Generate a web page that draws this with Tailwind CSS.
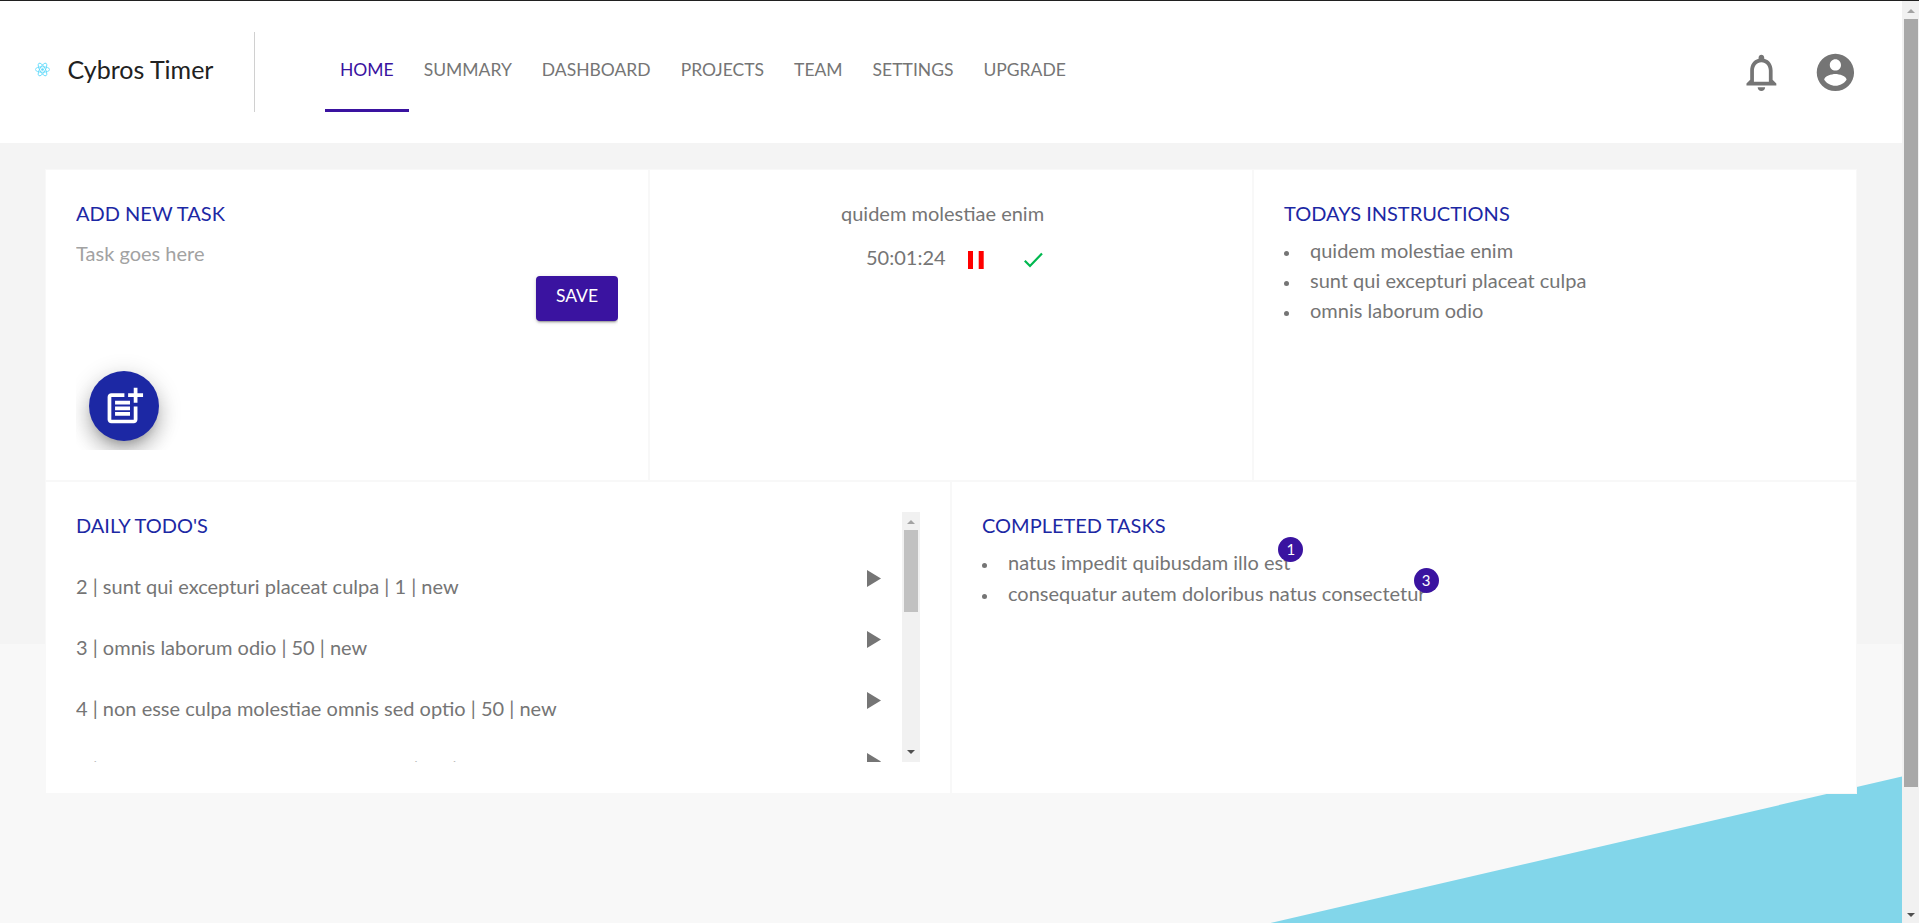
<!DOCTYPE html>
<html lang="en">
<head>
<meta charset="utf-8">
<title>Cybros Timer</title>
<script src="https://cdn.jsdelivr.net/npm/@tailwindcss/browser@4"></script>
</head>
<body class="h-[923px] w-[1919px] overflow-hidden bg-[#f8f8f8] font-[Lato,'Noto_Sans',sans-serif] text-[20px] leading-[24px] text-[#757575]">
<div class="relative flex h-full border-t border-[#202020]">

  <!-- Page backdrop: grey band and teal wedge -->
  <div class="absolute inset-x-0 top-0 h-[643px] bg-[#f4f4f4]"></div>
  <svg class="absolute left-0 top-0 h-[922px] w-[1902px]" viewBox="0 1 1902 922"><path d="M1902 776.6V923H1270.5z" fill="#82d6ea"/></svg>

  <div class="relative flex w-[1902px] flex-col">
    <header class="flex h-[142px] items-start bg-white pt-[31px]">
      <div class="flex h-[80px] w-[255px] items-center border-r border-[#d0d0d0] pb-[5px] pl-[35px]">
        <svg class="h-[15px] w-[15px] shrink-0" viewBox="-11.5 -11.5 23 23" fill="none" stroke="#61dafb" stroke-width="1.300"><circle r="2.05" fill="#61dafb" stroke="none"/><ellipse rx="11" ry="4.2"/><ellipse rx="11" ry="4.2" transform="rotate(60)"/><ellipse rx="11" ry="4.2" transform="rotate(120)"/></svg>
        <span class="mb-[2px] ml-[17.5px] whitespace-nowrap text-[25px] leading-[30px] text-[#212121]">Cybros Timer</span>
      </div>
      <nav class="ml-[70px] flex h-[80px] text-[17.5px] leading-[21px]">
        <a class="flex items-center border-b-[3px] border-[#3a13a0] px-[15px] pb-[3px] text-[#3a13a0]">HOME</a>
        <a class="flex items-center px-[15px] pb-[6px]">SUMMARY</a>
        <a class="flex items-center px-[15px] pb-[6px]">DASHBOARD</a>
        <a class="flex items-center px-[15px] pb-[6px]">PROJECTS</a>
        <a class="flex items-center px-[15px] pb-[6px]">TEAM</a>
        <a class="flex items-center px-[15px] pb-[6px]">SETTINGS</a>
        <a class="flex items-center px-[15px] pb-[6px]">UPGRADE</a>
      </nav>
      <div class="ml-auto mr-[44.5px] mt-[17.5px] flex gap-[28.7px]">
        <svg class="size-[44.8px]" viewBox="0 0 24 24" fill="#757575"><path d="M12 22c1.1 0 2-.9 2-2h-4c0 1.1.9 2 2 2zm6-6v-5c0-3.07-1.63-5.64-4.5-6.32V4c0-.83-.67-1.5-1.5-1.5s-1.5.67-1.5 1.5v.68C7.64 5.36 6 7.92 6 11v5l-2 2v1h16v-1l-2-2zm-2 1H8v-6c0-2.48 1.51-4.5 4-4.5s4 2.02 4 4.5v6z"/></svg>
        <svg class="size-[44.8px]" viewBox="0 0 24 24" fill="#757575"><path d="M12 2C6.48 2 2 6.48 2 12s4.48 10 10 10 10-4.48 10-10S17.52 2 12 2zm0 3c1.66 0 3 1.34 3 3s-1.34 3-3 3-3-1.34-3-3 1.34-3 3-3zm0 14.2c-2.5 0-4.71-1.28-6-3.22.03-1.99 4-3.08 6-3.08 1.99 0 5.97 1.09 6 3.08-1.29 1.94-3.5 3.22-6 3.22z"/></svg>
      </div>
    </header>

    <main class="ml-[45px] mt-[26px] w-[1812px] border border-[#f8f8f8] bg-white">
      <div class="grid h-[311px] grid-cols-[603px_604px_603px] border-b border-[#f8f8f8]">
        <section class="border-r border-[#f8f8f8] p-[30px] pr-[31px]">
          <div class="flex h-[250px] w-[542px] flex-col overflow-hidden">
            <h2 class="leading-[26px] text-[#1c28a4]">ADD NEW TASK</h2>
            <p class="mt-[15px] text-[#a2a2a2]">Task goes here</p>
            <button class="mt-[11px] flex h-[45px] w-[82px] shrink-0 justify-center self-end rounded-[4px] bg-[#3a13a0] pt-[9px] text-[17.5px] leading-[21px] text-white shadow-[0_3px_1px_-2px_rgba(0,0,0,0.2),0_2px_2px_0_rgba(0,0,0,0.14),0_1px_5px_0_rgba(0,0,0,0.12)]">SAVE</button>
            <div class="ml-[13px] mt-[50px] flex size-[70px] shrink-0 items-center justify-center rounded-full bg-[#1c28a4] shadow-[0_7px_8px_-4px_rgba(0,0,0,0.2),0_12px_17px_2px_rgba(0,0,0,0.14),0_5px_22px_4px_rgba(0,0,0,0.12)]">
              <svg class="size-[44.8px]" viewBox="0 0 24 24" fill="#fff"><path d="M17 19.22H5V7h7V5H5c-1.1 0-2 .9-2 2v12c0 1.1.9 2 2 2h12c1.1 0 2-.9 2-2v-7h-2v7.22z"/><path d="M19 2h-2v3h-3c.01.01 0 2 0 2h3v2.99c.01.01 2 0 2 0V7h3V5h-3V2zM7 9h8v2H7zM7 12v2h8v-2h-3zM7 15h8v2H7z"/></svg>
            </div>
          </div>
        </section>
        <section class="border-x border-[#f8f8f8] py-[30px] pl-[191px]">
          <p class="leading-[26px]">quidem molestiae enim</p>
          <div class="ml-[25px] mt-[19px] flex">
            <span class="w-[102px]">50:01:24</span>
            <svg class="mt-[6px] h-[18px] w-[16px]" viewBox="0 0 16 18" fill="#f00"><path d="M0 0h5v18H0zM10.700 0h5v18h-5z"/></svg>
            <svg class="ml-[40px] mt-[7px] h-[16px] w-[19px]" viewBox="0 0 19 16" fill="none" stroke="#00b84f" stroke-width="2.200"><path d="M.8 8.800L6 14 18 1.500"/></svg>
          </div>
        </section>
        <section class="border-l border-[#f8f8f8] py-[30px] pl-[30px]">
          <h2 class="leading-[26px] text-[#1c28a4]">TODAYS INSTRUCTIONS</h2>
          <ul class="mt-[9px] leading-[30px]">
            <li class="flex items-center"><i class="mr-[21px] mt-[7px] size-[5px] rounded-full bg-[#757575]"></i>quidem molestiae enim</li>
            <li class="flex items-center"><i class="mr-[21px] mt-[7px] size-[5px] rounded-full bg-[#757575]"></i>sunt qui excepturi placeat culpa</li>
            <li class="flex items-center"><i class="mr-[21px] mt-[7px] size-[5px] rounded-full bg-[#757575]"></i>omnis laborum odio</li>
          </ul>
        </section>
      </div>
      <div class="grid h-[312px] grid-cols-2">
        <section class="border-r border-t border-[#f8f8f8] pl-[30px] pr-[30px] pt-[30px]">
          <div class="flex h-[250px] w-[844px] overflow-hidden">
            <div class="flex-1">
              <h2 class="leading-[26px] text-[#1c28a4]">DAILY TODO'S</h2>
              <ul class="mt-[25px]">
                <li class="flex h-[61px] justify-between pr-[21px]"><span class="pt-[11px]">2 | sunt qui excepturi placeat culpa | 1 | new</span><svg class="mt-[7px] h-[17px] w-[14px]" viewBox="0 0 14 17" fill="#757575"><path d="M0 0l14 8.500L0 17z"/></svg></li>
                <li class="flex h-[61px] justify-between pr-[21px]"><span class="pt-[11px]">3 | omnis laborum odio | 50 | new</span><svg class="mt-[7px] h-[17px] w-[14px]" viewBox="0 0 14 17" fill="#757575"><path d="M0 0l14 8.500L0 17z"/></svg></li>
                <li class="flex h-[61px] justify-between pr-[21px]"><span class="pt-[11px]">4 | non esse culpa molestiae omnis sed optio | 50 | new</span><svg class="mt-[7px] h-[17px] w-[14px]" viewBox="0 0 14 17" fill="#757575"><path d="M0 0l14 8.500L0 17z"/></svg></li>
                <li class="flex h-[61px] justify-between pr-[21px]"><span class="pt-[11px]">5 | illo expedita consequatur quia in et | 50 | new</span><svg class="mt-[7px] h-[17px] w-[14px]" viewBox="0 0 14 17" fill="#757575"><path d="M0 0l14 8.500L0 17z"/></svg></li>
              </ul>
            </div>
            <div class="flex w-[18px] flex-col items-center bg-[#f1f1f1]">
              <svg class="h-[18px] w-[18px]" viewBox="0 0 18 18" fill="#a3a3a3"><path d="M5 12h8L9 8z"/></svg>
              <div class="h-[82px] w-[14px] bg-[#c1c1c1]"></div>
              <svg class="mt-auto h-[18px] w-[18px]" viewBox="0 0 18 18" fill="#505050"><path d="M5 6h8l-4 4z"/></svg>
            </div>
          </div>
        </section>
        <section class="border-l border-t border-[#f8f8f8] pl-[30px] pt-[30px]">
          <h2 class="leading-[26px] text-[#1c28a4]">COMPLETED TASKS</h2>
          <ul class="mt-[9px] leading-[31px]">
            <li class="flex items-center"><i class="mr-[21px] mt-[6px] size-[5px] rounded-full bg-[#757575]"></i><span class="relative">natus impedit quibusdam illo est<b class="absolute -right-[13px] -top-[10px] flex size-[25px] items-center justify-center rounded-full bg-[#3a13a0] text-[15px] font-normal leading-none text-white">1</b></span></li>
            <li class="flex items-center"><i class="mr-[21px] mt-[6px] size-[5px] rounded-full bg-[#757575]"></i><span class="relative">consequatur autem doloribus natus consectetur<b class="absolute -right-[13px] -top-[10px] flex size-[25px] items-center justify-center rounded-full bg-[#3a13a0] text-[15px] font-normal leading-none text-white">3</b></span></li>
          </ul>
        </section>
      </div>
    </main>
  </div>

  <!-- Page scrollbar -->
  <div class="relative flex w-[17px] flex-col bg-[#f1f1f1]">
    <svg class="h-[18px] w-[18px]" viewBox="0 0 18 18" fill="#a3a3a3"><path d="M5 12h8L9 8z"/></svg>
    <div class="ml-[2px] h-[768px] w-[14px] bg-[#a8a8a8]"></div>
    <svg class="mt-auto h-[18px] w-[18px]" viewBox="0 0 18 18" fill="#505050"><path d="M5 8h8l-4 4z"/></svg>
  </div>
</div>
</body>
</html>
